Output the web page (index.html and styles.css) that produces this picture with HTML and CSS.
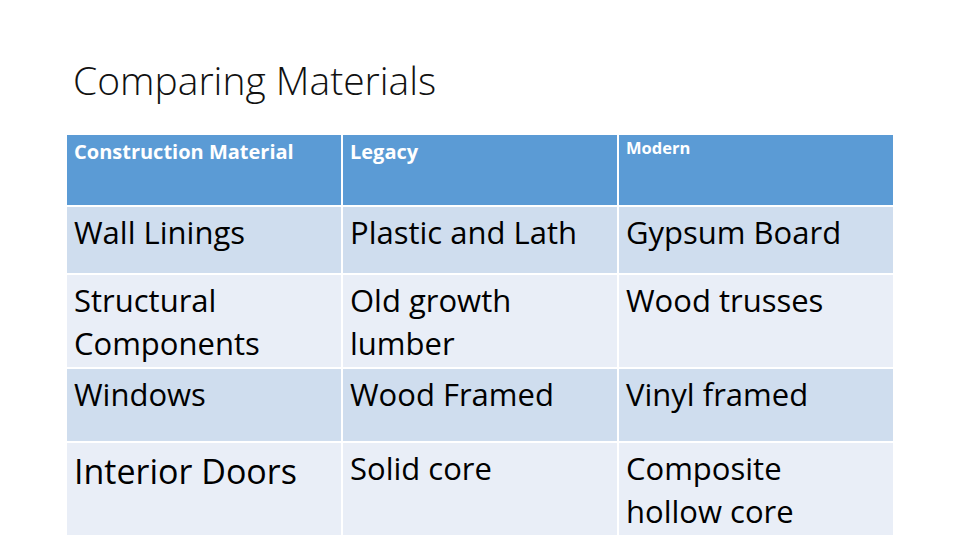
FILE: index.html
```html
<!DOCTYPE html>
<html>
<head>
<meta charset="utf-8">
<link rel="stylesheet" href="styles.css">
</head>
<body>
<div class="slide">
  <h1 class="title">Comparing Materials</h1>
  <div class="table">
    <div class="cell head">Construction Material</div>
    <div class="cell head">Legacy</div>
    <div class="cell head small">Modern</div>

    <div class="cell dark">Wall Linings</div>
    <div class="cell dark">Plastic and Lath</div>
    <div class="cell dark">Gypsum Board</div>

    <div class="cell light">Structural Components</div>
    <div class="cell light">Old growth<br>lumber</div>
    <div class="cell light">Wood trusses</div>

    <div class="cell dark">Windows</div>
    <div class="cell dark">Wood Framed</div>
    <div class="cell dark">Vinyl framed</div>

    <div class="cell light big">Interior Doors</div>
    <div class="cell light">Solid core</div>
    <div class="cell light">Composite<br>hollow core</div>
  </div>
</div>
</body>
</html>
```

FILE: styles.css
```css
html, body {
  margin: 0;
  padding: 0;
  background: #ffffff;
}

.slide {
  width: 960px;
  height: 540px;
  overflow: hidden;
  box-sizing: border-box;
  padding: 58px 67px 0 67px;
  font-family: "Open Sans", "Liberation Sans", sans-serif;
  color: #000;
}

.title {
  margin: 0 0 33px 0;
  padding-left: 6px;
  font-size: 39px;
  line-height: 44px;
  font-weight: 300;
  color: #111;
}

.table {
  display: grid;
  grid-template-columns: 274px 274px 274px;
  grid-template-rows: 70px 66px 92px 72px 92px;
  gap: 2px;
  width: 826px;
}

.cell {
  box-sizing: border-box;
  padding: 4px 7px 0 7px;
  font-size: 31px;
  line-height: 43px;
}

.head {
  background: #5b9bd5;
  color: #fff;
  font-weight: 700;
  font-size: 20px;
  line-height: 26px;
}

.head.small {
  font-size: 16.5px;
  line-height: 18px;
}

.dark {
  background: #cfddee;
}

.light {
  background: #e9eef7;
}

.big {
  font-size: 34px;
  line-height: 48px;
}
```
